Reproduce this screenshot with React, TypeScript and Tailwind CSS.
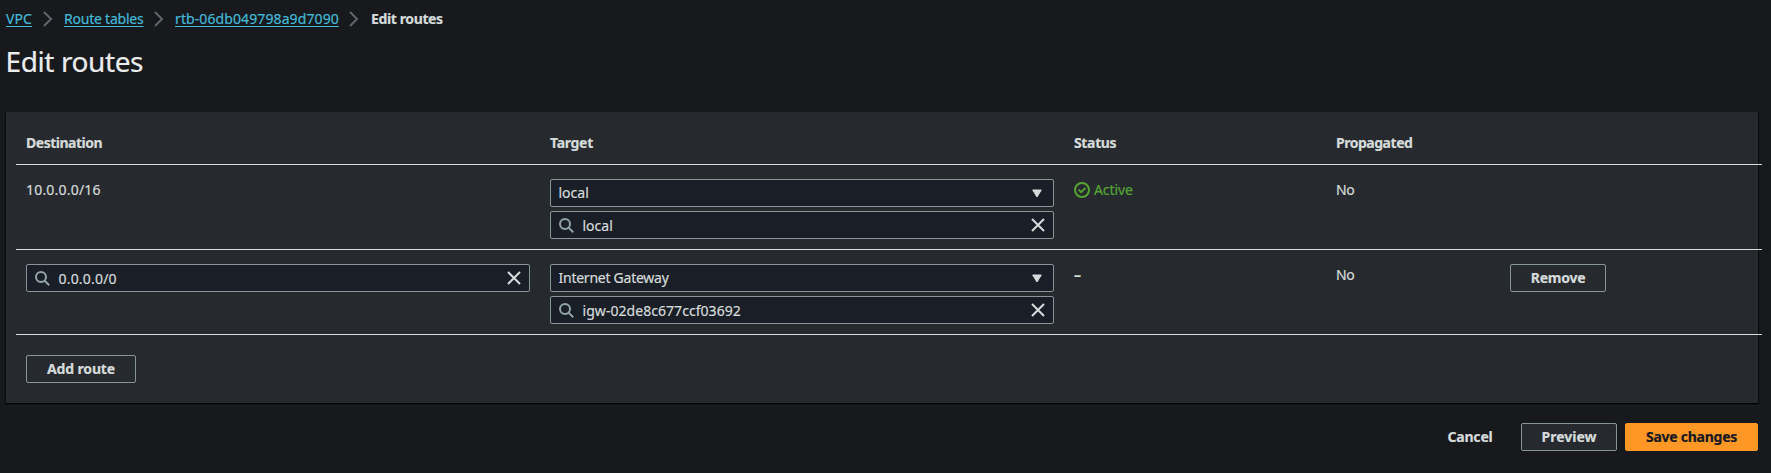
import type { ReactNode } from "react";

function Chevron() {
  return (
    <svg width="10" height="16" viewBox="0 0 10 16" fill="none" stroke="#5f666c" strokeWidth="2" className="shrink-0">
      <path d="M1 1l7 7-7 7" />
    </svg>
  );
}

function SearchIcon() {
  return (
    <svg width="15" height="15" viewBox="0 0 15 15" fill="none" stroke="#95a5a6" strokeWidth="2" className="shrink-0">
      <circle cx="6" cy="6" r="5" />
      <path d="M9.6 9.6L14.2 14.2" />
    </svg>
  );
}

function CloseIcon() {
  return (
    <svg width="14" height="14" viewBox="0 0 14 14" fill="none" stroke="#d5dbdb" strokeWidth="2" className="shrink-0">
      <path d="M1 1l12 12M13 1L1 13" />
    </svg>
  );
}

function CaretIcon() {
  return (
    <svg width="10" height="9" viewBox="0 0 10 9" fill="#d5dbdb" stroke="#d5dbdb" strokeLinejoin="round" className="shrink-0">
      <path d="M.7 1h8.6L5 8z" />
    </svg>
  );
}

function CheckIcon() {
  return (
    <svg width="16" height="16" viewBox="0 0 16 16" fill="none" stroke="#55a532" strokeWidth="2" className="shrink-0">
      <circle cx="8" cy="8" r="7" />
      <path d="M4.6 7.6l2.6 2.5 4.2-4.2" />
    </svg>
  );
}

function SearchInput({ children }: { children: ReactNode }) {
  return (
    <div className="flex h-7 items-center rounded-[2px] border border-[#879596] bg-[#1a1f27] px-2">
      <SearchIcon />
      <span className="mt-0.5 ml-[8.5px] grow">{children}</span>
      <CloseIcon />
    </div>
  );
}

function Select({ children }: { children: ReactNode }) {
  return (
    <div className="flex h-7 items-center justify-between rounded-[2px] border border-[#879596] bg-[#1a1f27] pr-[11px] pl-[7.5px]">
      {children}
      <CaretIcon />
    </div>
  );
}

function Button({ children, className }: { children: ReactNode; className: string }) {
  return (
    <button className={`flex h-7 items-center justify-center rounded-[2px] border font-bold ${className}`}>
      {children}
    </button>
  );
}

const row =
  "grid w-[1746px] grid-cols-[524px_524px_262px_174px_262px] border-b border-[#d5dbdb] [&>*]:px-2.5";

export default function App() {
  return (
    <div className="flex h-[473px] w-[1771px] flex-col overflow-hidden bg-[#17191c] pl-1.5 font-['Noto_Sans',sans-serif] text-[14px] leading-5 text-[#d5dbdb] [-webkit-text-stroke:0.2px]">
      <nav className="flex h-[37px] items-center text-[#44b9d6]">
        <a className="w-[26px] tracking-[0.1px] whitespace-nowrap underline underline-offset-2">VPC</a>
        <span className="ml-[11px] flex"><Chevron /></span>
        <a className="ml-[11px] w-20 tracking-[-0.22px] whitespace-nowrap underline underline-offset-2">Route tables</a>
        <span className="ml-2.5 flex"><Chevron /></span>
        <a className="ml-[11px] w-[164px] tracking-[0.1px] whitespace-nowrap underline underline-offset-2">rtb-06db049798a9d7090</a>
        <span className="ml-2.5 flex"><Chevron /></span>
        <span className="ml-3 font-bold tracking-[-0.38px] text-[#d5dbdb]">Edit routes</span>
      </nav>
      <h1 className="-ml-[0.5px] mt-1.5 h-9 text-[28px] leading-9 tracking-[-0.4px] text-[#eaeded]">Edit routes</h1>

      <main className="mt-[33px] h-[291px] w-[1752px] bg-[#262a2e] pl-2.5 shadow-[0_1px_1px_0_rgba(0,0,0,0.8),1px_1px_1px_0_rgba(0,0,0,0.4),-1px_1px_1px_0_rgba(0,0,0,0.4)]">
        <div className={`${row} h-[53px] pt-[21px] font-bold`}>
          <span className="tracking-[-0.48px]">Destination</span>
          <span className="tracking-[-0.3px]">Target</span>
          <span className="tracking-[-0.35px]">Status</span>
          <span className="tracking-[-0.48px]">Propagated</span>
          <span />
        </div>

        <div className={`${row} h-[85px] pt-[14px]`}>
          <span className="pt-[1px] tracking-[0.2px]">10.0.0.0/16</span>
          <div className="flex flex-col gap-1">
            <Select>local</Select>
            <SearchInput>local</SearchInput>
          </div>
          <span className="flex h-[22px] items-center gap-1 tracking-[-0.1px] text-[#55a532]">
            <CheckIcon />
            Active
          </span>
          <span className="pt-[1px] tracking-[-0.3px]">No</span>
          <span />
        </div>

        <div className={`${row} h-[85px] pt-[14px]`}>
          <div>
            <SearchInput><span className="tracking-[0.2px]">0.0.0.0/0</span></SearchInput>
          </div>
          <div className="flex flex-col gap-1">
            <Select><span className="tracking-[-0.25px]">Internet Gateway</span></Select>
            <SearchInput><span className="tracking-[0.05px]">igw-02de8c677ccf03692</span></SearchInput>
          </div>
          <span className="pt-[1px] font-bold">–</span>
          <span className="pt-[1px] tracking-[-0.3px]">No</span>
          <div>
            <Button className="w-24 border-[#879596] tracking-[-0.25px]">Remove</Button>
          </div>
        </div>

        <div className="px-2.5 pt-5">
          <Button className="w-[110px] border-[#879596] tracking-[-0.15px]">Add route</Button>
        </div>
      </main>

      <footer className="mt-5 flex w-[1752px] justify-end">
        <Button className="mr-2 w-[86px] border-transparent tracking-[-0.2px]">Cancel</Button>
        <Button className="mr-2 w-24 border-[#879596] bg-[#262a2e]">Preview</Button>
        <Button className="w-[133px] border-[#ff9727] bg-[#ff9727] tracking-[-0.25px] text-[#16191f]">Save changes</Button>
      </footer>
    </div>
  );
}
